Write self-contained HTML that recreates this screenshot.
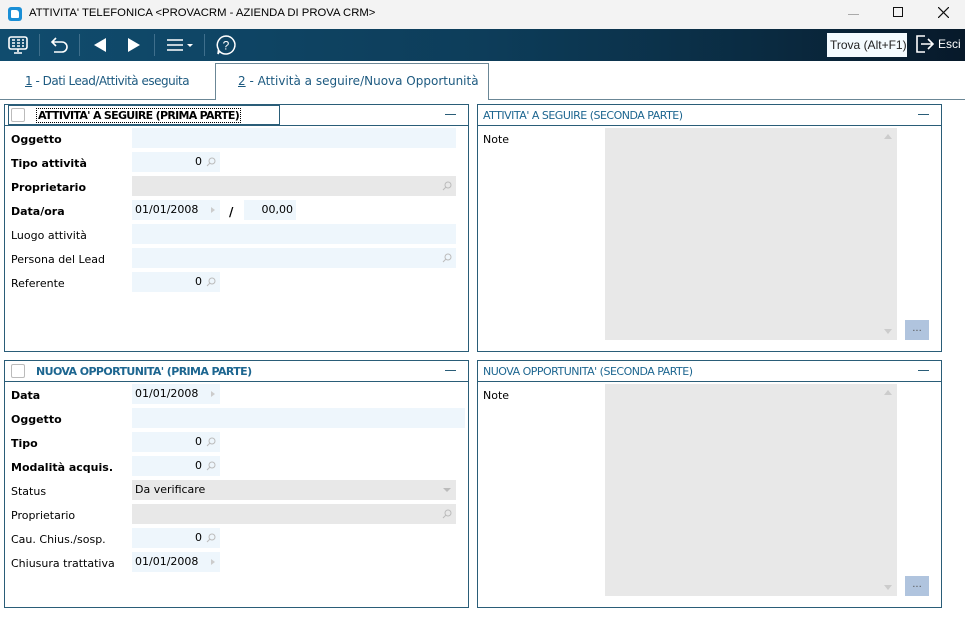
<!DOCTYPE html>
<html><head><meta charset="utf-8"><style>
*{margin:0;padding:0;box-sizing:border-box}
body{width:965px;height:618px;background:#fff;font-family:"DejaVu Sans","Liberation Sans",sans-serif;font-size:11px;color:#000;position:relative;overflow:hidden}
.a{position:absolute}
.title{left:0;top:0;width:965px;height:29px;background:#f3f3f3}
.tb{left:0;top:29px;width:965px;height:32px;background:linear-gradient(90deg,#104c6e 0%,#0d3d5a 50%,#0a2a40 80%,#07192a 100%)}
.sep{top:5px;width:1px;height:22px;background:#3f6f8c}
.box{border:1px solid #2a5d78;background:#fff}
.hd{height:21px;border-bottom:1px solid #2a5d78;left:0;right:0;top:0}
.ht{top:4px;font-size:11px;color:#1d6690;letter-spacing:-0.5px;white-space:nowrap}
.min{right:12px;top:9px;width:11px;height:1px;background:#2a5d78}
.cb{left:6px;top:3px;width:14px;height:14px;border:1px solid #bbb;border-radius:2px;background:#fff}
.lb{left:6px;font-size:11px}
.b{font-weight:bold}
.in{background:#eef6fc;height:20px}
.gr{background:#e8e8e8;height:20px}
.v{font-size:11px;top:3px}
.arr{width:0;height:0;border-top:3px solid transparent;border-bottom:3px solid transparent;border-left:4px solid #ccc}
</style></head><body>
<div class="a title">
 <div class="a" style="left:8px;top:7px;width:14px;height:14px;background:#1a8fd6;border-radius:3px"><div class="a" style="left:3px;top:3px;width:8px;height:8px;background:#fff;border-radius:1px 3px 1px 1px"></div></div>
 <div class="a" style="left:29px;top:7px;font-size:11.3px;font-family:'Liberation Sans',sans-serif;white-space:nowrap">ATTIVITA' TELEFONICA &lt;PROVACRM - AZIENDA DI PROVA CRM&gt;</div>
 <div class="a" style="left:848px;top:14px;width:11px;height:1px;background:#aaa"></div>
 <div class="a" style="left:893px;top:7px;width:10px;height:10px;border:1px solid #111"></div>
 <svg class="a" style="left:938px;top:7px" width="11" height="11"><path d="M0 0L11 11M11 0L0 11" stroke="#111" stroke-width="1.2"/></svg>
</div>
<div class="a tb">
 <svg class="a" style="left:8px;top:6px" width="20" height="20"><rect x="1" y="2" width="18" height="12" rx="2" fill="none" stroke="#fff" stroke-width="1.6"/><path d="M4 5h3M9 5h3M14 5h2M4 8h3M9 8h3M14 8h2M4 11h3M9 11h3M14 11h2" stroke="#fff" stroke-width="1.6"/><path d="M10 14v3M6 18h8" stroke="#fff" stroke-width="1.6"/></svg>
 <div class="a sep" style="left:39px"></div>
 <svg class="a" style="left:50px;top:7px" width="20" height="18"><path d="M6 2L2 6l4 4M2 6h10a5 5 0 010 10H4" fill="none" stroke="#fff" stroke-width="1.6"/></svg>
 <div class="a sep" style="left:79px"></div>
 <svg class="a" style="left:93px;top:9px" width="14" height="14"><path d="M13 0v14L1 7z" fill="#fff"/></svg>
 <svg class="a" style="left:127px;top:9px" width="14" height="14"><path d="M1 0v14l12-7z" fill="#fff"/></svg>
 <div class="a sep" style="left:154px"></div>
 <svg class="a" style="left:166px;top:9px" width="30" height="14"><path d="M1 2h16M1 7h16M1 12h16" stroke="#fff" stroke-width="1.6"/><path d="M21 6h6l-3 3z" fill="#fff"/></svg>
 <div class="a sep" style="left:204px"></div>
 <svg class="a" style="left:215px;top:5px" width="22" height="22"><path d="M11 2a9 9 0 1 1-6.5 15.3L3 20l.5-4.5A9 9 0 0 1 11 2z" fill="none" stroke="#fff" stroke-width="1.5"/><text x="11" y="15.5" font-size="12" fill="#fff" text-anchor="middle" font-family="Liberation Sans">?</text></svg>
 <div class="a" style="left:827px;top:4px;width:80px;height:24px;background:#f4fbff;font-size:12px;font-family:'Liberation Sans',sans-serif;padding:5px 0 0 3px;color:#222">Trova (Alt+F1)</div>
 <svg class="a" style="left:915px;top:5px" width="20" height="20"><path d="M10 2H2v16h8" fill="none" stroke="#fff" stroke-width="1.6"/><path d="M6 10h12M13 5l5 5-5 5" fill="none" stroke="#fff" stroke-width="1.6"/></svg>
 <div class="a" style="left:938px;top:8px;color:#fff;font-size:12px;font-family:'Liberation Sans',sans-serif">Esci</div>
</div>
<div class="a" style="left:0;top:99px;width:965px;height:1px;background:#6b8796"></div>
<div class="a" style="left:25px;top:74px;font-size:12px;color:#1d5a80;letter-spacing:-0.5px;white-space:nowrap"><u>1</u> - Dati Lead/Attività eseguita</div>
<div class="a" style="left:215px;top:63px;width:274px;height:37px;border:1px solid #6b8796;border-bottom:none;background:#fff"><div class="a" style="left:22px;top:10px;font-size:12px;color:#1d5a80;white-space:nowrap"><u>2</u> - Attività a seguire/Nuova Opportunità</div></div>

<!-- top left -->
<div class="a box" style="left:4px;top:104px;width:465px;height:248px">
 <div class="a hd"><div class="a cb"></div><div class="a" style="left:3px;top:0;width:272px;height:20px;border:1px solid #2a5d78"></div><div class="a ht b" style="left:31px;top:3px;color:#000;border:1px dotted #000;padding:0 1px;letter-spacing:-0.7px">ATTIVITA' A SEGUIRE (PRIMA PARTE)</div><div class="a min"></div></div>
 <div class="a lb b" style="top:28px">Oggetto</div><div class="a in" style="left:127px;top:23px;width:324px"></div>
 <div class="a lb b" style="top:52px">Tipo attività</div><div class="a in" style="left:127px;top:47px;width:88px"><div class="a v" style="right:18px">0</div><svg class="a" style="right:4px;top:5px" width="10" height="10"><circle cx="6" cy="4" r="3" fill="none" stroke="#bbb"/><path d="M4 6L1 9" stroke="#bbb"/></svg></div>
 <div class="a lb b" style="top:76px">Proprietario</div><div class="a gr" style="left:127px;top:71px;width:324px"><svg class="a" style="right:4px;top:5px" width="10" height="10"><circle cx="6" cy="4" r="3" fill="none" stroke="#bbb"/><path d="M4 6L1 9" stroke="#bbb"/></svg></div>
 <div class="a lb b" style="top:100px">Data/ora</div><div class="a in" style="left:127px;top:95px;width:88px"><div class="a v" style="left:3px">01/01/2008</div><div class="a arr" style="right:5px;top:7px"></div></div>
 <div class="a b" style="left:224px;top:100px;font-size:12px">/</div>
 <div class="a in" style="left:239px;top:95px;width:52px"><div class="a v" style="right:3px">00,00</div></div>
 <div class="a lb" style="top:124px">Luogo attività</div><div class="a in" style="left:127px;top:119px;width:324px"></div>
 <div class="a lb" style="top:148px">Persona del Lead</div><div class="a in" style="left:127px;top:143px;width:324px"><svg class="a" style="right:4px;top:5px" width="10" height="10"><circle cx="6" cy="4" r="3" fill="none" stroke="#bbb"/><path d="M4 6L1 9" stroke="#bbb"/></svg></div>
 <div class="a lb" style="top:172px">Referente</div><div class="a in" style="left:127px;top:167px;width:88px"><div class="a v" style="right:18px">0</div><svg class="a" style="right:4px;top:5px" width="10" height="10"><circle cx="6" cy="4" r="3" fill="none" stroke="#bbb"/><path d="M4 6L1 9" stroke="#bbb"/></svg></div>
</div>

<!-- top right -->
<div class="a box" style="left:477px;top:104px;width:465px;height:248px">
 <div class="a hd"><div class="a ht" style="left:5px">ATTIVITA' A SEGUIRE (SECONDA PARTE)</div><div class="a min"></div></div>
 <div class="a" style="left:5px;top:28px">Note</div>
 <div class="a" style="left:127px;top:23px;width:292px;height:212px;background:#e8e8e8"><div class="a" style="right:5px;top:6px;border-left:4px solid transparent;border-right:4px solid transparent;border-bottom:5px solid #ccc"></div><div class="a" style="right:5px;bottom:6px;border-left:4px solid transparent;border-right:4px solid transparent;border-top:5px solid #ccc"></div></div>
 <div class="a" style="left:427px;top:215px;width:24px;height:20px;background:#b0c4de;color:#555;text-align:center;font-size:10px;line-height:18px">...</div>
</div>

<!-- bottom left -->
<div class="a box" style="left:4px;top:360px;width:465px;height:248px">
 <div class="a hd"><div class="a cb"></div><div class="a ht b" style="left:31px;letter-spacing:-0.6px">NUOVA OPPORTUNITA' (PRIMA PARTE)</div><div class="a min"></div></div>
 <div class="a lb b" style="top:28px">Data</div><div class="a in" style="left:127px;top:23px;width:88px"><div class="a v" style="left:3px">01/01/2008</div><div class="a arr" style="right:5px;top:7px"></div></div>
 <div class="a lb b" style="top:52px">Oggetto</div><div class="a in" style="left:127px;top:47px;width:333px"></div>
 <div class="a lb b" style="top:76px">Tipo</div><div class="a in" style="left:127px;top:71px;width:88px"><div class="a v" style="right:18px">0</div><svg class="a" style="right:4px;top:5px" width="10" height="10"><circle cx="6" cy="4" r="3" fill="none" stroke="#bbb"/><path d="M4 6L1 9" stroke="#bbb"/></svg></div>
 <div class="a lb b" style="top:100px">Modalità acquis.</div><div class="a in" style="left:127px;top:95px;width:88px"><div class="a v" style="right:18px">0</div><svg class="a" style="right:4px;top:5px" width="10" height="10"><circle cx="6" cy="4" r="3" fill="none" stroke="#bbb"/><path d="M4 6L1 9" stroke="#bbb"/></svg></div>
 <div class="a lb" style="top:124px">Status</div><div class="a gr" style="left:127px;top:119px;width:324px"><div class="a v" style="left:3px">Da verificare</div><div class="a" style="right:5px;top:8px;border-left:4px solid transparent;border-right:4px solid transparent;border-top:4px solid #bbb"></div></div>
 <div class="a lb" style="top:148px">Proprietario</div><div class="a gr" style="left:127px;top:143px;width:324px"><svg class="a" style="right:4px;top:5px" width="10" height="10"><circle cx="6" cy="4" r="3" fill="none" stroke="#bbb"/><path d="M4 6L1 9" stroke="#bbb"/></svg></div>
 <div class="a lb" style="top:172px">Cau. Chius./sosp.</div><div class="a in" style="left:127px;top:167px;width:88px"><div class="a v" style="right:18px">0</div><svg class="a" style="right:4px;top:5px" width="10" height="10"><circle cx="6" cy="4" r="3" fill="none" stroke="#bbb"/><path d="M4 6L1 9" stroke="#bbb"/></svg></div>
 <div class="a lb" style="top:196px">Chiusura trattativa</div><div class="a in" style="left:127px;top:191px;width:88px"><div class="a v" style="left:3px">01/01/2008</div><div class="a arr" style="right:5px;top:7px"></div></div>
</div>

<!-- bottom right -->
<div class="a box" style="left:477px;top:360px;width:465px;height:248px">
 <div class="a hd"><div class="a ht" style="left:5px">NUOVA OPPORTUNITA' (SECONDA PARTE)</div><div class="a min"></div></div>
 <div class="a" style="left:5px;top:28px">Note</div>
 <div class="a" style="left:127px;top:23px;width:292px;height:212px;background:#e8e8e8"><div class="a" style="right:5px;top:6px;border-left:4px solid transparent;border-right:4px solid transparent;border-bottom:5px solid #ccc"></div><div class="a" style="right:5px;bottom:6px;border-left:4px solid transparent;border-right:4px solid transparent;border-top:5px solid #ccc"></div></div>
 <div class="a" style="left:427px;top:215px;width:24px;height:20px;background:#b0c4de;color:#555;text-align:center;font-size:10px;line-height:18px">...</div>
</div>
</body></html>
